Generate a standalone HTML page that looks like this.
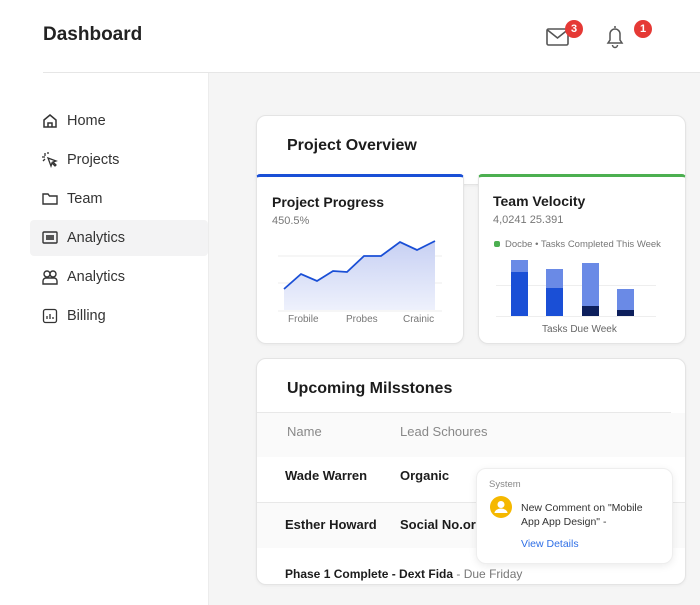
<!DOCTYPE html><html><head><style>
*{box-sizing:border-box;margin:0;padding:0}
body{width:700px;height:605px;overflow:hidden;background:#f5f5f5;font-family:"Liberation Sans",sans-serif;color:#1c1c1c;position:relative}
.abs{position:absolute}
.card{position:absolute;background:#fff;border:1px solid #e4e4e4;border-radius:10px;box-shadow:0 1px 3px rgba(0,0,0,.05)}
.nav{position:absolute;left:30px;width:178px;height:36px;display:flex;align-items:center;padding-left:12px;font-size:14.5px;color:#333}
.nav svg{margin-right:9px}
.badge{position:absolute;width:18px;height:18px;border-radius:9px;background:#e53935;color:#fff;font-size:11px;font-weight:bold;text-align:center;line-height:18px}
</style></head><body>
<div class="abs" style="left:0;top:0;width:700px;height:72px;background:#fff"></div>
<div class="abs" style="left:0;top:72px;width:208px;height:533px;background:#fff"></div>
<div class="abs" style="left:208px;top:72px;width:1px;height:533px;background:#ececec"></div>
<div class="abs" style="left:43px;top:72px;width:657px;height:1px;background:#e6e6e6"></div>
<div class="abs" style="left:43px;top:24px;font-size:19px;font-weight:bold;color:#222">Dashboard</div>
<svg class="abs" style="left:546px;top:27px" width="24" height="20" viewBox="0 0 24 20"><rect x="1" y="2" width="21" height="16" rx="1.5" fill="none" stroke="#555" stroke-width="1.6"/><path d="M1.5 3l10 8 10-8" fill="none" stroke="#555" stroke-width="1.6"/></svg>
<div class="badge" style="left:565px;top:20px">3</div>
<svg class="abs" style="left:604px;top:24px" width="22" height="25" viewBox="0 0 22 25"><path d="M11 2v2M4 19h14l-2-3v-6a5 5 0 0 0-10 0v6z M8.5 21a2.5 2.5 0 0 0 5 0" fill="none" stroke="#555" stroke-width="1.5"/></svg>
<div class="badge" style="left:634px;top:20px">1</div>

<div class="nav" style="top:103px"><svg width="16" height="16" viewBox="0 0 16 16"><path d="M2 7l6-5 6 5v7H2z M6 14v-4h4v4" fill="none" stroke="#333" stroke-width="1.5"/></svg>Home</div>
<div class="nav" style="top:142px"><svg width="16" height="16" viewBox="0 0 16 16"><path d="M6 6l8 3-3 1 3 3-1 1-3-3-1 3z M3 1v3M0 5h3M1 9l2-2M6 0v2" fill="none" stroke="#333" stroke-width="1.3"/></svg>Projects</div>
<div class="nav" style="top:181px"><svg width="16" height="16" viewBox="0 0 16 16"><path d="M1 3h5l1.5 2H15v8H1z" fill="none" stroke="#333" stroke-width="1.4"/></svg>Team</div>
<div class="nav" style="top:220px;background:#f3f3f4;border-radius:4px"><svg width="16" height="16" viewBox="0 0 16 16"><rect x="1" y="2" width="14" height="11" rx="1" fill="none" stroke="#333" stroke-width="1.4"/><rect x="4" y="5" width="8" height="5" fill="#555"/></svg>Analytics</div>
<div class="nav" style="top:259px"><svg width="16" height="16" viewBox="0 0 16 16"><circle cx="5" cy="5" r="3" fill="none" stroke="#333" stroke-width="1.4"/><circle cx="11" cy="5" r="3" fill="none" stroke="#333" stroke-width="1.4"/><path d="M1 15v-3a3 3 0 0 1 3-3h8a3 3 0 0 1 3 3v3z" fill="none" stroke="#333" stroke-width="1.4"/></svg>Analytics</div>
<div class="nav" style="top:298px"><svg width="16" height="16" viewBox="0 0 16 16"><rect x="1.5" y="1.5" width="13" height="13" rx="2" fill="none" stroke="#333" stroke-width="1.3"/><path d="M5 11V8M8 11V6M11 11V9" stroke="#333" stroke-width="1.3"/></svg>Billing</div>

<div class="card" style="left:256px;top:115px;width:430px;height:70px"></div>
<div class="abs" style="left:287px;top:137px;font-size:16px;font-weight:bold">Project Overview</div>

<div class="card" style="left:256px;top:174px;width:208px;height:170px;border-top:3px solid #1a4fd6;border-radius:4px 4px 10px 10px"></div>
<div class="abs" style="left:272px;top:194px;font-size:14px;font-weight:bold">Project Progress</div>
<div class="abs" style="left:272px;top:215px;font-size:11px;color:#777">450.5%</div>
<svg class="abs" style="left:278px;top:235px" width="164" height="80" viewBox="0 0 164 80">
<defs><linearGradient id="g" x1="0" y1="0" x2="0" y2="1"><stop offset="0" stop-color="#c7d0f3"/><stop offset="1" stop-color="#eef1fc"/></linearGradient></defs>
<line x1="0" y1="48" x2="164" y2="48" stroke="#eee"/><line x1="0" y1="21" x2="164" y2="21" stroke="#eee"/>
<path d="M6 54L23 39 39 46 55 36 69 37 86 21 103 21 122 7 139 15 157 6V75H6z" fill="url(#g)"/>
<path d="M6 54L23 39 39 46 55 36 69 37 86 21 103 21 122 7 139 15 157 6" fill="none" stroke="#1a4fd6" stroke-width="1.8"/>
<line x1="0" y1="76" x2="164" y2="76" stroke="#eee"/></svg>
<div class="abs" style="left:288px;top:314px;font-size:10px;color:#777">Frobile</div>
<div class="abs" style="left:346px;top:314px;font-size:10px;color:#777">Probes</div>
<div class="abs" style="left:403px;top:314px;font-size:10px;color:#777">Crainic</div>

<div class="card" style="left:478px;top:174px;width:208px;height:170px;border-top:3px solid #4caf50;border-radius:4px 4px 10px 10px"></div>
<div class="abs" style="left:493px;top:193px;font-size:14px;font-weight:bold">Team Velocity</div>
<div class="abs" style="left:493px;top:214px;font-size:11px;color:#777">4,0241 25.391</div>
<div class="abs" style="left:494px;top:241px;width:6px;height:6px;border-radius:2px;background:#4caf50"></div>
<div class="abs" style="left:505px;top:239px;font-size:9.5px;color:#777">Docbe • Tasks Completed This Week</div>
<div class="abs" style="left:496px;top:285px;width:160px;height:1px;background:#eee"></div>
<div class="abs" style="left:496px;top:316px;width:160px;height:1px;background:#eee"></div>
<div class="abs" style="left:511px;top:260px;width:17px;height:56px;background:#1a4fd6;border-top:12px solid #6a8ae6"></div>
<div class="abs" style="left:546px;top:269px;width:17px;height:47px;background:#1a4fd6;border-top:19px solid #6a8ae6"></div>
<div class="abs" style="left:582px;top:263px;width:17px;height:53px;background:#0d1f5c;border-top:43px solid #6a8ae6"></div>
<div class="abs" style="left:617px;top:289px;width:17px;height:27px;background:#0d1f5c;border-top:21px solid #6a8ae6"></div>
<div class="abs" style="left:542px;top:324px;font-size:10px;color:#666">Tasks Due Week</div>

<div class="card" style="left:256px;top:358px;width:430px;height:227px;overflow:hidden">
<div class="abs" style="left:30px;top:21px;font-size:16px;font-weight:bold">Upcoming Milsstones</div>
<div class="abs" style="left:0;top:53px;width:414px;height:1px;background:#e8e8e8"></div>
<div class="abs" style="left:0;top:54px;width:430px;height:44px;background:#fafafa"></div>
<div class="abs" style="left:30px;top:65px;font-size:13px;color:#888">Name</div>
<div class="abs" style="left:143px;top:65px;font-size:13px;color:#888">Lead Schoures</div>
<div class="abs" style="left:28px;top:109px;font-size:13px;font-weight:bold">Wade Warren</div>
<div class="abs" style="left:143px;top:109px;font-size:13px;font-weight:bold">Organic</div>
<div class="abs" style="left:0;top:143px;width:430px;height:1px;background:#e8e8e8"></div>
<div class="abs" style="left:0;top:144px;width:430px;height:45px;background:#fafafa"></div>
<div class="abs" style="left:28px;top:158px;font-size:13px;font-weight:bold">Esther Howard</div>
<div class="abs" style="left:143px;top:158px;font-size:13px;font-weight:bold">Social No.or</div>
<div class="abs" style="left:28px;top:208px;font-size:12px;font-weight:bold">Phase 1 Complete - Dext Fida <span style="font-weight:normal;color:#777">- Due Friday</span></div>
</div>

<div class="card" style="left:476px;top:468px;width:197px;height:96px;border:1px solid #eee;box-shadow:0 2px 8px rgba(0,0,0,.08)"></div>
<div class="abs" style="left:489px;top:479px;font-size:9.5px;color:#888">System</div>
<svg class="abs" style="left:490px;top:496px" width="22" height="22" viewBox="0 0 22 22"><circle cx="11" cy="11" r="11" fill="#f5b800"/><circle cx="11" cy="8.5" r="3.5" fill="#fff"/><path d="M4.5 17a6.5 4.5 0 0 1 13 0z" fill="#fff"/></svg>
<div class="abs" style="left:521px;top:501px;font-size:10.5px;line-height:14px;color:#333">New Comment on "Mobile<br>App App Design" -</div>
<div class="abs" style="left:521px;top:538px;font-size:10.5px;color:#2f6fe6">View Details</div>
</body></html>
